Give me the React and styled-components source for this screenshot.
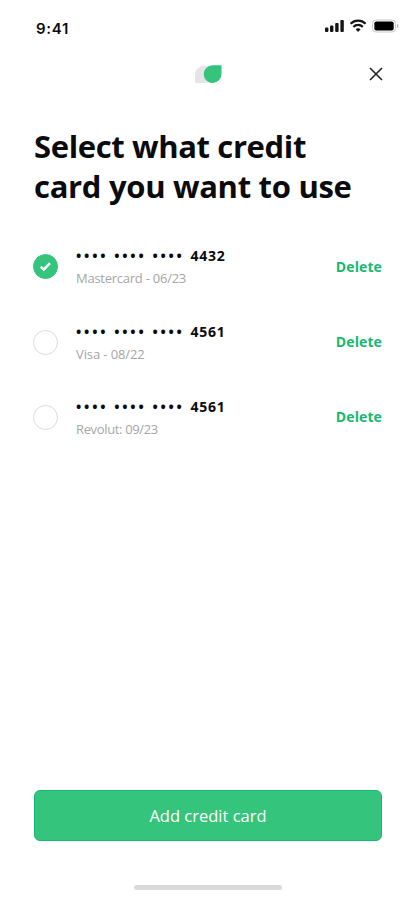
import { useState } from 'react';
import styled, { createGlobalStyle, ThemeProvider } from 'styled-components';

const theme = {
  colors: {
    accent: '#34c47c',
    accentDark: '#16b970',
    text: '#0b0b0d',
    muted: '#a5a5a5',
    border: '#dcdcdc',
  },
  fonts: {
    main: '"Open Sans", "Noto Sans", sans-serif',
    status: 'Inter, sans-serif',
  },
};

const cards = [
  { id: 1, last: '4432', info: 'Mastercard - 06/23', spacing: '-0.25px' },
  { id: 2, last: '4561', info: 'Visa - 08/22', spacing: '-0.1px' },
  { id: 3, last: '4561', info: 'Revolut: 09/23', spacing: '-0.35px' },
];

const GlobalStyle = createGlobalStyle`
  * {
    box-sizing: border-box;
  }

  body {
    margin: 0;
    background-color: #fff;
  }

  h1,
  p,
  ul {
    margin: 0;
    padding: 0;
  }

  button {
    padding: 0;
    border: none;
    background: none;
    font-family: inherit;
    cursor: pointer;
  }
`;

const Screen = styled.main`
  display: flex;
  flex-direction: column;
  width: 415px;
  height: 900px;
  overflow: hidden;

  background-color: #fff;
  font-family: ${p => p.theme.fonts.main};
  color: ${p => p.theme.colors.text};
`;

const StatusBar = styled.div`
  display: flex;
  justify-content: space-between;
  align-items: center;
  height: 52px;
  padding: 0 16px 0 36px;
`;

const Time = styled.p`
  padding-top: 6px;
  font-family: ${p => p.theme.fonts.status};
  font-weight: 600;
  font-size: 15px;
  line-height: 20px;
  letter-spacing: 0.7px;
`;

const StatusIcons = styled.svg`
  display: block;
`;

const Header = styled.header`
  display: grid;
  grid-template-columns: 1fr 28px 1fr;
  align-items: center;
  height: 44px;
  padding: 0 32px 0 33px;
`;

const Logo = styled.svg`
  grid-column: 2;
  display: block;
`;

const CloseButton = styled.button`
  justify-self: end;
  display: flex;
`;

const Title = styled.h1`
  padding: 31px 34px 0;

  font-weight: 700;
  font-size: 31px;
  line-height: 39.5px;
  white-space: nowrap;
`;

const TitleLine = styled.span`
  display: block;
  letter-spacing: ${p => p.$spacing};
`;

const CardList = styled.ul`
  flex-grow: 1;
  padding: 23px 33px 0;
  list-style: none;
`;

const CardItem = styled.li`
  display: flex;
  align-items: center;
  height: 75.4px;
`;

const Radio = styled.button`
  display: flex;
  justify-content: center;
  align-items: center;
  flex-shrink: 0;
  width: 25px;
  height: 25px;

  border: 1px solid
    ${p => (p.$checked ? p.theme.colors.accent : p.theme.colors.border)};
  border-radius: 50%;
  background-color: ${p => (p.$checked ? p.theme.colors.accent : '#fff')};
`;

const CardText = styled.div`
  flex-grow: 1;
  padding: 2px 0 0 18px;
`;

const CardNumber = styled.p`
  display: flex;
  font-weight: 700;
  font-size: 14px;
  line-height: 22px;
`;

const Mask = styled.span`
  width: 38.2px;
  letter-spacing: 2.8px;
`;

const LastDigits = styled.span`
  letter-spacing: 0.7px;
`;

const CardInfo = styled.p`
  font-size: 13px;
  line-height: 23px;
  letter-spacing: ${p => p.$spacing};
  color: ${p => p.theme.colors.muted};
`;

const DeleteButton = styled.button`
  font-weight: 700;
  font-size: 14px;
  line-height: 20px;
  letter-spacing: 0.1px;
  color: ${p => p.theme.colors.accentDark};
`;

const Footer = styled.footer`
  display: flex;
  flex-direction: column;
  align-items: center;
  padding: 0 33px 10px 34px;
`;

const AddButton = styled.button`
  width: 100%;
  height: 51px;
  margin-bottom: 44px;

  border: 1px solid ${p => p.theme.colors.accentDark};
  border-radius: 6px;
  background-color: ${p => p.theme.colors.accent};
  font-size: 16.5px;
  color: #fff;
`;

const HomeIndicator = styled.div`
  width: 148px;
  height: 5px;
  border-radius: 3px;
  background-color: #dadada;
`;

export default function App() {
  const [selected, setSelected] = useState(1);

  return (
    <ThemeProvider theme={theme}>
      <GlobalStyle />
      <Screen>
        <StatusBar>
          <Time>9:41</Time>
          <StatusIcons width="75" height="14" viewBox="0 0 75 14">
            <g fill="#141414">
              <rect x="1" y="8.5" width="3.4" height="4.5" rx="1" />
              <rect x="6" y="6.5" width="3.4" height="6.5" rx="1" />
              <rect x="11.2" y="4" width="3.4" height="9" rx="1" />
              <rect x="16.4" y="1" width="3.4" height="12" rx="1" />
            </g>
            <g fill="none" stroke="#141414" strokeWidth="2.2">
              <path d="M26.6 4.7a10.6 10.6 0 0 1 15 0" />
              <path d="M29.4 7.9a6.7 6.7 0 0 1 9.4 0" />
            </g>
            <path d="M31.6 10.3a3.7 3.7 0 0 1 5 0L34.1 13z" fill="#141414" />
            <rect
              x="48.5"
              y="1"
              width="23"
              height="12"
              rx="3.5"
              fill="#fff"
              stroke="#c9c9c9"
            />
            <rect x="50.3" y="2.6" width="19.4" height="8.8" rx="2" />
            <path d="M73 5v4q1.5-.6 1.5-2T73 5" fill="#b5b5b5" />
          </StatusIcons>
        </StatusBar>

        <Header>
          <Logo width="28" height="20" viewBox="0 0 28 20">
            <path
              d="M1 19v-8.5a9 9 0 0 1 9-9a9 9 0 0 1 9 9a8.5 8.5 0 0 1-9 8.5z"
              fill="#e5e5e8"
            />
            <path
              d="M18.5 1.3H27.500V10a8.900 8.900 0 1 1-9-8.700z"
              fill={theme.colors.accent}
            />
          </Logo>
          <CloseButton aria-label="Close">
            <svg width="14" height="14" viewBox="0 0 14 14">
              <path d="M1 1l12 12M13 1L1 13" stroke="#222" strokeWidth="1.6" />
            </svg>
          </CloseButton>
        </Header>

        <Title>
          <TitleLine $spacing="-0.37px">Select what credit</TitleLine>
          <TitleLine $spacing="-0.3px">card you want to use</TitleLine>
        </Title>

        <CardList>
          {cards.map(({ id, last, info, spacing }) => (
            <CardItem key={id}>
              <Radio
                $checked={id === selected}
                aria-label={info}
                onClick={() => setSelected(id)}
              >
                {id === selected && (
                  <svg width="13" height="11" viewBox="0 0 13 11">
                    <path
                      d="M1.7 5.7l3 3L11 2.2"
                      fill="none"
                      stroke="#fff"
                      strokeWidth="2.4"
                    />
                  </svg>
                )}
              </Radio>
              <CardText>
                <CardNumber>
                  <Mask>••••</Mask>
                  <Mask>••••</Mask>
                  <Mask>••••</Mask>
                  <LastDigits>{last}</LastDigits>
                </CardNumber>
                <CardInfo $spacing={spacing}>{info}</CardInfo>
              </CardText>
              <DeleteButton>Delete</DeleteButton>
            </CardItem>
          ))}
        </CardList>

        <Footer>
          <AddButton>Add credit card</AddButton>
          <HomeIndicator />
        </Footer>
      </Screen>
    </ThemeProvider>
  );
}
